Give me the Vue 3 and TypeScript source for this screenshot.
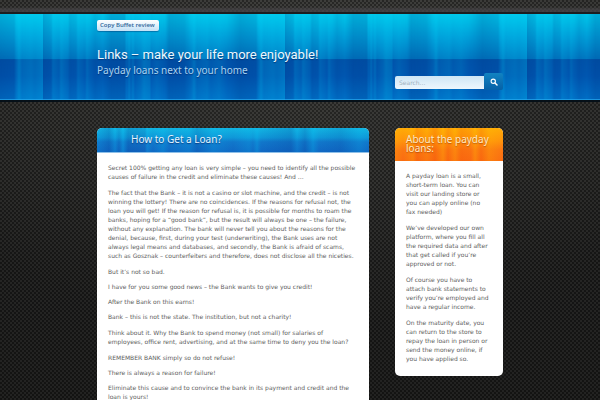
<script setup lang="ts">
import { ref } from 'vue'

interface Entry {
  text: string
  remark?: boolean
}

const query = ref<string>('')

const article: Entry[] = [
  { text: 'Secret 100% getting any loan is very simple – you need to identify all the possible causes of failure in the credit and eliminate these causes! And …' },
  { text: 'The fact that the Bank – it is not a casino or slot machine, and the credit – is not winning the lottery! There are no coincidences. If the reasons for refusal not, the loan you will get! If the reason for refusal is, it is possible for months to roam the banks, hoping for a “good bank”, but the result will always be one – the failure, without any explanation. The bank will never tell you about the reasons for the denial, because, first, during your test (underwriting), the Bank uses are not always legal means and databases, and secondly, the Bank is afraid of scams, such as Gosznak – counterfeiters and therefore, does not disclose all the niceties.' },
  { text: 'But it’s not so bad.', remark: true },
  { text: 'I have for you some good news – the Bank wants to give you credit!', remark: true },
  { text: 'After the Bank on this earns!', remark: true },
  { text: 'Bank – this is not the state. The institution, but not a charity!' },
  { text: 'Think about it. Why the Bank to spend money (not small) for salaries of employees, office rent, advertising, and at the same time to deny you the loan?' },
  { text: 'REMEMBER BANK simply so do not refuse!', remark: true },
  { text: 'There is always a reason for failure!', remark: true },
  { text: 'Eliminate this cause and to convince the bank in its payment and credit and the loan is yours!' },
]

const about: string[] = [
  'A payday loan is a small, short-term loan. You can visit our landing store or you can apply online (no fax needed)',
  'We’ve developed our own platform, where you fill all the required data and after that get called if you’re approved or not.',
  'Of course you have to attach bank statements to verify you’re employed and have a regular income.',
  'On the maturity date, you can return to the store to repay the loan in person or send the money online, if you have applied so.',
]
</script>

<template>
  <div class="page">
    <div class="topbar"></div>
    <header class="banner">
      <div class="wrap banner-inner">
        <nav class="menu">
          <a class="menu-link" href="#review">Copy Buffet review</a>
        </nav>
        <div class="brand-row">
          <div class="brand">
            <h1 class="title">Links – make your life more enjoyable!</h1>
            <p class="tagline">Payday loans next to your home</p>
          </div>
          <form class="search" role="search" @submit.prevent>
            <input v-model="query" class="search-field" type="text" placeholder="Search..." aria-label="Search" />
            <button class="search-button" type="submit" aria-label="Submit search">
              <svg class="search-icon" viewBox="0 0 16 16" aria-hidden="true">
                <circle cx="6.5" cy="6.5" r="4.3" fill="none" stroke="#fff" stroke-width="2.2" />
                <path d="M10 10 L14 14" stroke="#fff" stroke-width="3" stroke-linecap="round" />
              </svg>
            </button>
          </form>
        </div>
      </div>
    </header>

    <div class="wrap columns">
      <main class="panel">
        <h2 class="panel-head blue">How to Get a Loan?</h2>
        <div class="panel-body">
          <p v-for="(entry, i) in article" :key="i" :class="{ remark: entry.remark }">{{ entry.text }}</p>
        </div>
      </main>
      <aside class="panel side">
        <h2 class="panel-head orange">About the payday loans:</h2>
        <div class="panel-body">
          <p v-for="(text, i) in about" :key="i">{{ text }}</p>
        </div>
      </aside>
    </div>
  </div>
</template>

<style>
body {
  margin: 0;
  overflow: hidden;
  background: #181817;
}
</style>

<style scoped>
.page {
  height: 100vh;
  overflow: hidden;
  color: #5e5e5e;
  font: 6px/9px "DejaVu Sans", sans-serif;
  background:
    repeating-conic-gradient(rgba(0, 0, 0, 0.3) 0 25%, rgba(255, 255, 255, 0.03) 0 50%) 0 0 / 4px 4px,
    radial-gradient(ellipse 420px 240px at 50% 90px, rgba(80, 80, 76, 0.35), transparent),
    linear-gradient(#31312f 0, #282826 100px, #1e1e1d 260px, #1b1b1a 100%);
}

.wrap {
  box-sizing: border-box;
  width: 68%;
  max-width: 960px;
  margin: 0 auto;
  padding: 0 1px;
}

.topbar {
  box-sizing: border-box;
  height: 14px;
  border-bottom: 2px solid #1c1e20;
  background: linear-gradient(transparent 0 7px, rgba(70, 68, 71, 0.7) 9px, rgba(68, 66, 70, 0.8) 12px);
}

.banner {
  border-bottom: 2px solid #061018;
  background:
    linear-gradient(transparent calc(100% - 1px), rgba(40, 170, 240, 0.7) calc(100% - 1px)),
    linear-gradient(90deg,
      rgba(0, 30, 110, 0.16) 0, rgba(0, 30, 110, 0.08) 8px,
      rgba(0, 220, 255, 0.12) 10px, rgba(0, 220, 255, 0.04) 16px,
      rgba(0, 220, 255, 0.16) 18px, rgba(0, 220, 255, 0.04) 25px,
      rgba(0, 30, 110, 0.1) 27px, rgba(0, 30, 110, 0.06) 33px,
      rgba(0, 220, 255, 0.1) 35px, transparent 42px,
      rgba(0, 220, 255, 0.12) 44px, rgba(0, 220, 255, 0.04) 47px,
      rgba(0, 30, 110, 0.08) 52px, transparent 60px,
      rgba(0, 30, 110, 0.16) 68px, rgba(0, 30, 110, 0.14) 82px,
      rgba(0, 220, 255, 0.04) 83px, rgba(0, 220, 255, 0.04) 85px,
      rgba(0, 220, 255, 0.16) 86px, rgba(0, 220, 255, 0.02) 88px,
      rgba(0, 220, 255, 0.14) 90px, transparent 92px,
      rgba(0, 220, 255, 0.1) 98px, rgba(0, 220, 255, 0.2) 101px,
      rgba(0, 220, 255, 0.14) 107px, transparent 108px,
      rgba(0, 220, 255, 0.08) 114px, transparent 122px,
      rgba(0, 30, 110, 0.16) 126px, rgba(0, 30, 110, 0.12) 141px,
      rgba(0, 220, 255, 0.06) 148px, rgba(0, 220, 255, 0.2) 151px,
      rgba(0, 220, 255, 0.06) 154px, rgba(0, 220, 255, 0.12) 164px,
      rgba(0, 220, 255, 0.04) 168px, rgba(0, 220, 255, 0.1) 176px,
      transparent 184px, rgba(0, 30, 110, 0.16) 197px,
      rgba(0, 30, 110, 0.1) 213px, rgba(0, 220, 255, 0.08) 215px,
      rgba(0, 220, 255, 0.24) 218px, rgba(0, 220, 255, 0.12) 221px,
      rgba(0, 220, 255, 0.18) 230px, rgba(0, 220, 255, 0.14) 234px,
      rgba(0, 220, 255, 0.22) 242px) 43px 0 / 242px 100%,
    linear-gradient(#00c6ea 0, #009fd9 26%, #0078c2 52%, #0053a9 53%, #0056b0 72%, #006fc6 100%);
}

.banner-inner {
  padding-top: 6px;
  padding-bottom: 10px;
}

.menu {
  display: flex;
}

.menu-link {
  padding: 1px 4px 1px 3px;
  border-radius: 2px;
  color: #2c6599;
  font-family: "Open Sans", sans-serif;
  font-weight: 600;
  line-height: 9px;
  text-decoration: none;
  background: linear-gradient(#fff, #c3e1f6);
  box-shadow: 0 1px 1px rgba(0, 40, 100, 0.4);
}

.brand-row {
  display: flex;
  align-items: flex-end;
  justify-content: space-between;
}

.brand {
  padding: 16px 0 12px;
}

.title,
.tagline,
.panel-head {
  margin: 0;
  font-family: "Noto Sans", sans-serif;
  font-weight: 400;
  text-shadow: 0 1px 1px rgba(0, 30, 90, 0.6);
}

.title {
  color: #ecf8ff;
  font-family: Roboto, sans-serif;
  font-size: 13px;
  line-height: 16px;
}

.tagline {
  color: #a9d4f2;
  font-size: 10px;
  line-height: 15px;
}

.search {
  display: flex;
  align-items: center;
  width: 108px;
}

.search-field {
  box-sizing: border-box;
  flex: 1;
  min-width: 0;
  height: 13px;
  margin: 2px 0 0;
  padding: 0 4px;
  border: 0;
  border-radius: 2px 0 0 2px;
  color: #456;
  font: inherit;
  background: linear-gradient(#cfe6f5, #eef7fd);
}

.search-field::placeholder {
  color: #9fb0bd;
}

.search-button {
  display: flex;
  align-items: center;
  justify-content: center;
  width: 19px;
  height: 17px;
  padding: 0;
  border: 0;
  border-radius: 2px;
  background: linear-gradient(#1183c2, #0560a6);
}

.search-icon {
  width: 8px;
  height: 8px;
}

.columns {
  display: grid;
  grid-template-columns: 272fr 108fr;
  gap: 26px;
  align-items: start;
  padding-top: 26px;
}

.panel {
  overflow: hidden;
  border-radius: 5px;
  background: #fff;
}

.panel-head {
  color: #e6f5ff;
  font-size: 10px;
  line-height: 22px;
}

.blue {
  padding: 0 34px 2px;
  border-bottom: 1px solid #8fc0e8;
  background:
    linear-gradient(90deg,
      rgba(0, 200, 255, 0.1) 0, rgba(0, 40, 130, 0.16) 12px,
      rgba(0, 210, 255, 0.16) 18px, rgba(0, 40, 130, 0.1) 22px,
      rgba(0, 210, 255, 0.22) 26px, rgba(0, 40, 130, 0.16) 31px,
      rgba(0, 40, 130, 0.1) 48px, rgba(0, 210, 255, 0.16) 50px,
      transparent 56px, rgba(0, 210, 255, 0.18) 66px,
      transparent 72px, rgba(0, 210, 255, 0.12) 92px,
      rgba(0, 40, 130, 0.12) 100px, rgba(0, 210, 255, 0.14) 116px,
      transparent 136px, rgba(0, 210, 255, 0.14) 152px,
      rgba(0, 210, 255, 0.04) 156px, rgba(0, 210, 255, 0.22) 160px,
      transparent 164px, rgba(0, 40, 130, 0.16) 194px,
      rgba(0, 210, 255, 0.1) 200px, rgba(0, 40, 130, 0.14) 208px,
      rgba(0, 210, 255, 0.22) 216px, transparent 222px,
      rgba(0, 40, 130, 0.1) 244px, rgba(0, 210, 255, 0.14) 262px,
      transparent 272px),
    linear-gradient(#12b4e2 0, #0f97d8 40%, #1177cb 58%, #1068c4 100%);
}

.orange {
  padding: 7px 10px 8px 11px;
  color: #ffe9c4;
  line-height: 9px;
  text-shadow: 0 1px 1px rgba(150, 60, 0, 0.6);
  background:
    linear-gradient(90deg,
      rgba(255, 210, 0, 0.16) 0, transparent 8px,
      rgba(255, 200, 0, 0.2) 18px, rgba(240, 70, 0, 0.16) 22px,
      rgba(255, 200, 0, 0.1) 32px, rgba(240, 70, 0, 0.2) 40px,
      rgba(255, 200, 0, 0.24) 48px, rgba(240, 70, 0, 0.14) 53px,
      rgba(255, 200, 0, 0.2) 60px, rgba(240, 70, 0, 0.16) 66px,
      rgba(240, 70, 0, 0.06) 76px, rgba(255, 200, 0, 0.24) 80px,
      rgba(240, 70, 0, 0.14) 86px, rgba(255, 200, 0, 0.2) 94px,
      transparent 108px),
    linear-gradient(#ffaa06 0, #ff920c 40%, #fb7612 65%, #fa6c12 100%);
}

.panel-body {
  padding: 10px 11px 6px;
}

.side .panel-body {
  padding-right: 13px;
}

.panel-body p {
  margin: 0 0 7px;
}

.panel-body .remark {
  margin-bottom: 6px;
}
</style>
